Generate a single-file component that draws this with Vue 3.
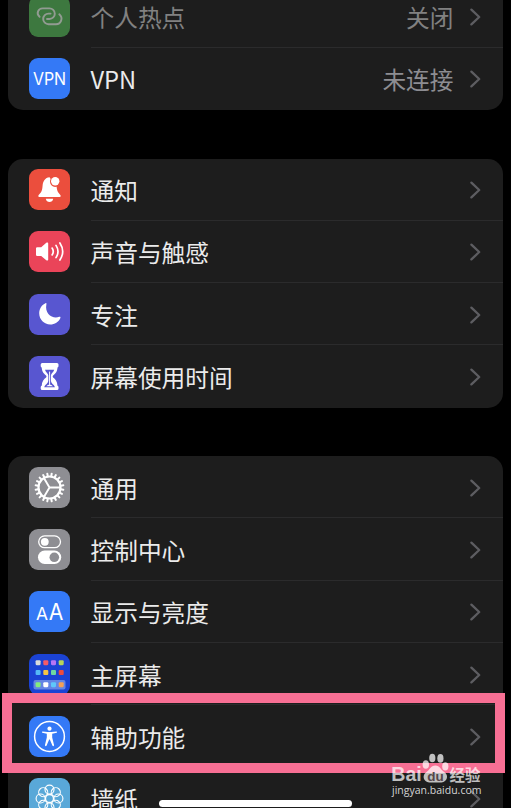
<script setup>
const groups = [
  [
    {icon: "hotspot", name: "个人热点", value: "关闭", disabled: true},
    {icon: "vpn", name: "VPN", value: "未连接"}
  ],
  [
    {icon: "notice", name: "通知"},
    {icon: "sound", name: "声音与触感"},
    {icon: "focus", name: "专注"},
    {icon: "time", name: "屏幕使用时间"}
  ],
  [
    {icon: "general", name: "通用"},
    {icon: "control", name: "控制中心"},
    {icon: "display", name: "显示与亮度"},
    {icon: "home", name: "主屏幕"},
    {icon: "access", name: "辅助功能"},
    {icon: "wallpaper", name: "墙纸"}
  ]
]
const apps = [
  ["#d9dadb", "#f25b68", "#b675f5", "#b5d45a"],
  ["#55b9f7", "#f7c445", "#6fd8a0", "#ee4b3c"],
  ["#84ec7e", "#ffffff", "#5fc8fa", "#f5a056"]
]
const appRows = [6.2, 16, 28.2]
</script>

<template>
<div class="screen">
  <div class="group" v-for="(group, i) in groups" :key="i">
    <div class="row" v-for="item in group" :key="item.icon" :class="{disabled: item.disabled}">
      <svg class="icon" :class="item.icon" viewBox="0 0 41 41">
        <g v-if="item.icon === 'hotspot'" class="line" stroke-width="1.9">
          <path d="M10.6 20.8C6.8 17.6 9.2 12.4 13.6 12.4H20.5A5.3 5.3 0 0 1 20.5 23H18"/>
          <path d="M21.6 17.6H19.5A5.3 5.3 0 0 0 19.5 28.2H27C32 28.2 34.6 22 30.3 18.3"/>
        </g>
        <text v-else-if="item.icon === 'vpn'" x="3.9" y="26.5" font-size="17.6" textLength="33.2" lengthAdjust="spacingAndGlyphs">VPN</text>
        <g v-else-if="item.icon === 'notice'" class="fill">
          <path d="M20.6 8.2C15.9 8.6 14 12.2 13.6 16.5C13.2 21.7 12.4 23.3 10.3 25.2C8.8 26.7 9 28 10.5 28H30.5C32 28 32.2 26.7 30.7 25.2C28.8 23.3 28 21.6 27.6 17.8C23.3 18.8 19.5 14.4 21.6 10.1Z"/>
          <circle cx="26.2" cy="12.3" r="4.2"/>
          <path d="M16.8 29.8H24.2C23.6 34.1 17.4 34.1 16.8 29.8Z"/>
        </g>
        <g v-else-if="item.icon === 'sound'">
          <path class="fill" d="M8.2 16.2H12.2L17.3 11.8C18.4 11 19.2 11.5 19.2 12.6V28.4C19.2 29.5 18.4 30 17.3 29.2L12.2 24.9H8.2Q7 24.9 7 23.7V17.4Q7 16.2 8.2 16.2Z"/>
          <path class="line" stroke-width="1.7" d="M23.1 17.1Q25.4 20.5 23.1 23.9M27 14.4Q31 20.5 27 26.6M30.9 12Q36.5 20.5 30.9 29"/>
        </g>
        <path v-else-if="item.icon === 'focus'" class="fill" d="M16.5 9.2C13 10.7 10.2 14.6 10.2 19.3C10.2 25.8 15.2 30.4 21.2 30.4C25.8 30.4 29.7 27.8 31.4 23.9C31.7 23 31.1 22.5 30.2 22.8C23.8 25.3 15.4 20.1 17.4 10.2C17.6 9.3 17.2 8.9 16.5 9.2Z"/>
        <g v-else-if="item.icon === 'time'">
          <path class="fill" d="M13.2 7H28Q29.5 7 29.5 8.5V10Q29.5 11.2 28.5 11.5C28.3 16 25.8 18.2 24.1 19.5Q23.2 20.5 24.1 21.5C26.2 23.1 28.3 25.4 28.5 29.8Q29.5 30.1 29.5 31.2V32.6Q29.5 34.1 28 34.1H13.2Q11.7 34.1 11.7 32.6V31.2Q11.7 30.1 12.7 29.8C12.9 25.4 15 23.1 17.1 21.5Q18 20.5 17.1 19.5C15.4 18.2 12.9 16 12.7 11.5Q11.7 11.2 11.7 10V8.5Q11.7 7 13.2 7Z"/>
          <path class="time_sand" d="M16 13.8H25.2C24.5 16.4 22.2 17.2 21.9 19.5V24.5C22.3 28 25.3 28.6 25.9 31.2H15.3C15.9 28.6 18.9 28 19.3 24.5V19.5C19 17.2 16.7 16.4 16 13.8Z"/>
          <path class="line" stroke-width="1" d="M20.6 16V28.5"/>
          <path class="fill" d="M17.2 30.2Q20.6 26.8 24 30.2Z"/>
        </g>
        <g v-else-if="item.icon === 'general'" class="line">
          <path v-for="n in 20" :key="n" d="M20.5 6.5V8.8" stroke-width="2" :transform="`rotate(${n * 18 + 9} 20.5 20.5)`"/>
          <circle cx="20.5" cy="20.5" r="11" stroke-width="2.2"/>
          <path stroke-width="1.9" d="M20.5 20.5H31M20.5 20.5L15.2 11.4M20.5 20.5L15.2 29.6"/>
        </g>
        <g v-else-if="item.icon === 'control'">
          <rect class="line" x="9.7" y="6.9" width="21.8" height="11.8" rx="5.9" stroke-width="1.3"/>
          <circle class="fill" cx="15.8" cy="12.8" r="3.9"/>
          <rect class="fill" x="9" y="21.6" width="23.2" height="13.4" rx="6.7"/>
          <circle class="control_knob" cx="25.3" cy="28.3" r="4.8"/>
        </g>
        <g v-else-if="item.icon === 'display'">
          <text x="6.9" y="28.8" font-size="17" textLength="12" lengthAdjust="spacingAndGlyphs">A</text>
          <text x="19.8" y="28.8" font-size="22.3" textLength="14.6" lengthAdjust="spacingAndGlyphs">A</text>
        </g>
        <g v-else-if="item.icon === 'home'">
          <rect class="home_dock" x="4.5" y="26.1" width="32" height="9.3" rx="2"/>
          <template v-for="(line, r) in apps" :key="r">
            <rect v-for="(color, c) in line" :key="c" :x="6.6 + c * 7.7" :y="appRows[r]" width="5" height="5" rx="1.1" :fill="color"/>
          </template>
        </g>
        <g v-else-if="item.icon === 'access'">
          <circle class="line" cx="20.5" cy="20.5" r="14.9" stroke-width="1.5"/>
          <circle class="fill" cx="20.5" cy="12.7" r="2.1"/>
          <path class="fill" d="M13.5 15.4L18.7 16H22.3L27.5 15.4Q28.8 15.8 27.7 16.8L23.2 17.8V21.6L25.1 29.3Q24.5 30.7 23.5 29.8L20.8 23.4H20.2L17.5 29.8Q16.5 30.7 15.9 29.3L17.8 21.6V17.8L13.3 16.8Q12.2 15.8 13.5 15.4Z"/>
        </g>
        <g v-else class="line" stroke-width="1.15">
          <circle v-for="n in 8" :key="n" cx="20.5" cy="11.6" r="4.5" :transform="`rotate(${n * 45} 20.5 20.5)`"/>
          <circle cx="20.5" cy="20.5" r="4" stroke-width="1.3"/>
        </g>
      </svg>
      <div class="content">
        <span class="name">{{ item.name }}</span>
        <span class="value">{{ item.value }}</span>
        <svg class="arrow" viewBox="0 0 11 18">
          <path d="M1.4 1.6L9.2 9L1.4 16.4"/>
        </svg>
      </div>
    </div>
  </div>

  <div class="highlight"></div>
  <div class="home_bar"></div>
  <svg class="watermark" viewBox="0 0 96 50">
    <text class="logo" x="3.3" y="31" font-size="19.5" textLength="30.5" lengthAdjust="spacingAndGlyphs">Bai</text>
    <ellipse cx="37.8" cy="14.5" rx="3.2" ry="4.3"/>
    <ellipse cx="44.3" cy="8" rx="3.1" ry="4.3"/>
    <ellipse cx="52.4" cy="8.4" rx="3.1" ry="4.3"/>
    <ellipse cx="57.3" cy="16.4" rx="3.1" ry="4.1"/>
    <path d="M47.3 15.5C52 15.5 52.8 20 56.5 22.3C61 25.3 59.3 32 53.5 32.4H41.2C35.3 32 33.7 25.3 38.2 22.3C42 19.7 42.5 15.5 47.3 15.5Z"/>
    <text class="du" x="39.3" y="30.5" font-size="13.5" textLength="16.5" lengthAdjust="spacingAndGlyphs">du</text>
    <text class="jingyan" x="61.5" y="30.7" font-size="15.5" textLength="31" lengthAdjust="spacingAndGlyphs">经验</text>
    <text class="url" x="4" y="43.8" font-size="11" textLength="89.5" lengthAdjust="spacingAndGlyphs">jingyan.baidu.com</text>
  </svg>
</div>
</template>

<style>
body{
  background-color: #000;
}
</style>

<style scoped>
.screen{
  position: relative;
  width: 511px;
  height: 808px;
  box-sizing: border-box;
  padding: 0 8px 0 7.5px;
  overflow: hidden;
  background-color: #000;
  font-family: "Noto Sans CJK SC", sans-serif;
}
.group{
  margin-bottom: 48.6px;
  border-radius: 15px;
  background-color: #1d1d1d;
  overflow: hidden;
}
.group:first-child{
  margin-top: -14.5px;
}
.row{
  display: flex;
  align-items: center;
  height: 62.25px;
  padding-left: 21.5px;
}
.icon{
  flex: none;
  width: 41px;
  height: 41px;
  border-radius: 9px;
}
.icon text{
  fill: #fff;
  font-family: Inter, sans-serif;
}
.fill{
  fill: #fff;
}
.line{
  fill: none;
  stroke: #fff;
  stroke-linecap: round;
  stroke-linejoin: round;
}
.hotspot{
  background-color: #3d783f;
}
.hotspot .line{
  stroke: #929b92;
}
.vpn, .display, .access{
  background-color: #3479f6;
}
.notice{
  background-color: #eb4e3d;
}
.sound{
  background-color: #ea4459;
}
.focus, .time{
  background-color: #5856d0;
}
.time_sand{
  fill: #5856d0;
}
.general, .control{
  background-color: #8e8e93;
}
.control_knob{
  fill: #8e8e93;
}
.home{
  background-color: #1b43d4;
}
.home_dock{
  fill: #6485e4;
}
.wallpaper{
  background-color: #59a8d8;
}
.content{
  flex: 1;
  display: flex;
  align-items: center;
  box-sizing: border-box;
  height: 100%;
  margin-left: 20.5px;
  padding-top: 2px;
  padding-right: 22.5px;
  border-bottom: 1px solid #2b2b2c;
}
.row:last-child .content{
  border-bottom-color: transparent;
}
.name{
  flex: 1;
  color: #ebebeb;
  font-size: 23.7px;
  line-height: 34px;
}
.value{
  margin-right: 16px;
  color: #8d8d92;
  font-size: 23.7px;
  line-height: 34px;
}
.disabled .name, .disabled .value{
  color: #818181;
}
.arrow{
  width: 11px;
  height: 18px;
}
.arrow path{
  fill: none;
  stroke: #5d5d61;
  stroke-width: 2.3;
  stroke-linecap: round;
  stroke-linejoin: round;
}
/*选中框*/
.highlight{
  position: absolute;
  left: 2px;
  top: 693px;
  width: 503px;
  height: 80px;
  box-sizing: border-box;
  border: 10px solid #f76f94;
}
.home_bar{
  position: absolute;
  left: 159px;
  top: 800px;
  width: 193px;
  height: 7px;
  border-radius: 4px;
  background-color: #fff;
}
.watermark{
  position: absolute;
  left: 388px;
  top: 750px;
  width: 96px;
  height: 50px;
  fill: rgba(255, 255, 255, .72);
}
.logo, .du{
  font-family: "Liberation Sans", Arial, sans-serif;
  font-weight: 700;
}
.du{
  fill: #57454a;
}
.jingyan{
  font-weight: 700;
}
.url{
  fill: rgba(255, 255, 255, .82);
  font-family: "Open Sans", sans-serif;
}
</style>
